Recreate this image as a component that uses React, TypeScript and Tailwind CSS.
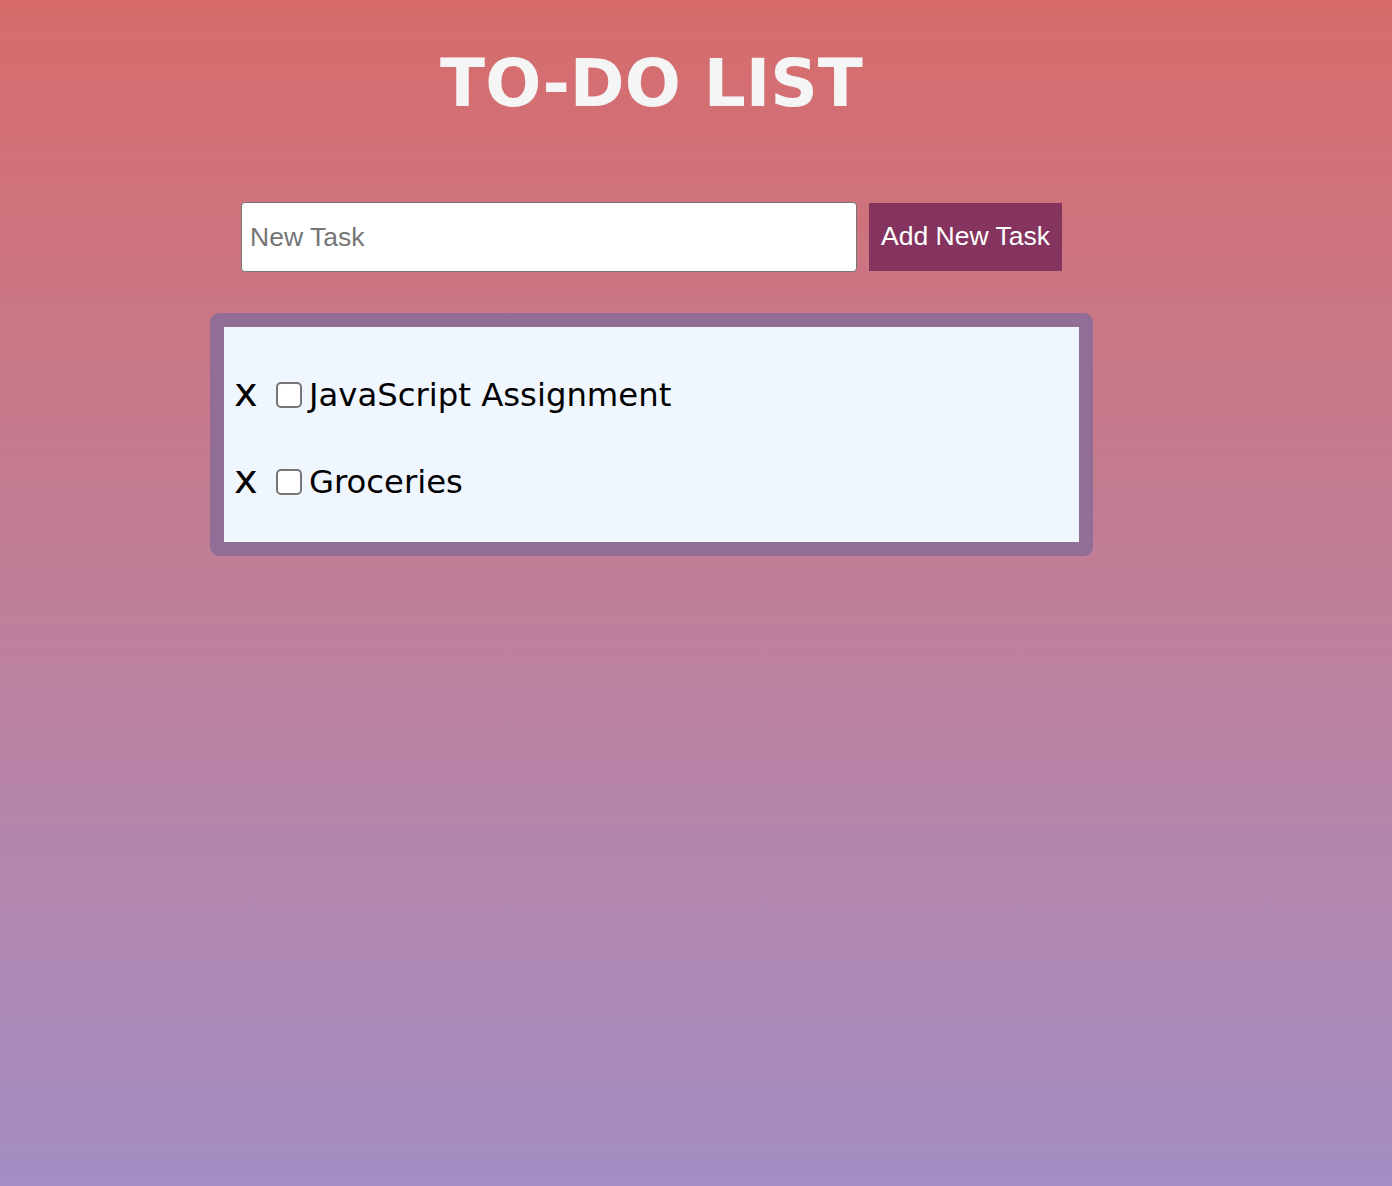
import { useState } from "react";

const TASKS = ["JavaScript Assignment", "Groceries"];

export default function App() {
  const [tasks, setTasks] = useState(TASKS);
  const [done, setDone] = useState<boolean[]>(TASKS.map(() => false));
  const [text, setText] = useState("");

  const addTask = () => {
    if (!text.trim()) return;
    setTasks([...tasks, text.trim()]);
    setDone([...done, false]);
    setText("");
  };

  const removeTask = (i: number) => {
    setTasks(tasks.filter((_, j) => j !== i));
    setDone(done.filter((_, j) => j !== i));
  };

  return (
    <div className="min-h-[1186px] w-full bg-gradient-to-b from-[#d76b6b] to-[#a38dc4]">
      <div className="w-[883px] ml-[210px] pt-[35px] flex flex-col">
        {/* Heading */}
        <h1 className="text-center text-[66px] leading-[98px] font-bold text-[#f5f5f5] font-['DejaVu_Sans',Verdana,sans-serif]">
          TO-DO LIST
        </h1>

        {/* New task row */}
        <div className="mt-[69px] flex items-center ml-[31px] gap-[12px]">
          <input
            value={text}
            onChange={(e) => setText(e.target.value)}
            placeholder="New Task"
            className="w-[616px] h-[70px] bg-white border border-[#767676] rounded-[4px] px-[8px] text-[26.5px] text-black placeholder:text-[#757575] font-['Liberation_Sans',Arial,sans-serif] outline-none"
          />
          <button
            onClick={addTask}
            className="h-[68px] px-[12px] bg-[#84345e] text-white text-[26.5px] font-['Liberation_Sans',Arial,sans-serif]"
          >
            Add New Task
          </button>
        </div>

        {/* Task list */}
        <div className="mt-[41px] border-[14px] border-[#926d96] rounded-[9px] bg-[#f0f6fe]">
          <ul className="pt-[44px] pb-[36px] flex flex-col gap-[39px]">
            {tasks.map((task, i) => (
              <li
                key={task + i}
                className="flex items-center h-[48px] pl-[10px] font-['DejaVu_Sans',Verdana,sans-serif] text-[32.3px] text-black"
              >
                <button
                  onClick={() => removeTask(i)}
                  className="w-[22px] pb-[6px] text-[40px] leading-none text-left"
                >
                  x
                </button>
                <input
                  type="checkbox"
                  checked={done[i]}
                  onChange={() =>
                    setDone(done.map((d, j) => (j === i ? !d : d)))
                  }
                  className="ml-[20px] mr-[7px] w-[26px] h-[26px] appearance-none bg-white border-2 border-[#767676] rounded-[5px] checked:bg-[#84345e]"
                />
                <span className={done[i] ? "line-through" : ""}>{task}</span>
              </li>
            ))}
          </ul>
        </div>
      </div>
    </div>
  );
}
